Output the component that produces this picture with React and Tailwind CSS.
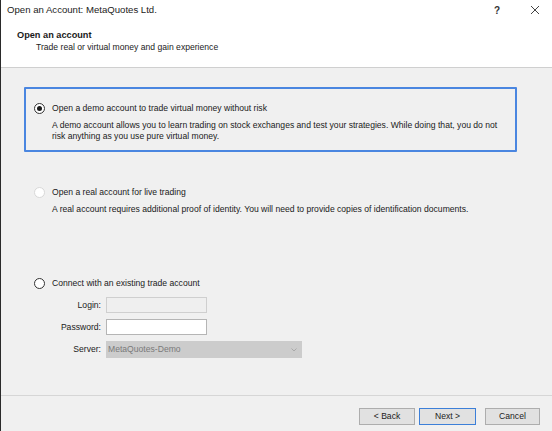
import React from "react";

function Radio({ checked }) {
  return (
    <span className="w-[11px] h-[11px] rounded-full border border-[#333] bg-white flex items-center justify-center shrink-0">
      {checked && <span className="w-[5px] h-[5px] rounded-full bg-[#1a1a1a]" />}
    </span>
  );
}

function RadioLight() {
  return <span className="w-[11px] h-[11px] rounded-full border border-[#d8d8d8] bg-white shrink-0" />;
}

export default function App() {
  return (
    <div
      className="w-[552px] h-[431px] bg-[#f0f0f0] border-l border-[#2a2a2a] flex flex-col text-[#1a1a1a] overflow-hidden"
      style={{ fontFamily: '"Liberation Sans", Arial, sans-serif' }}
    >
      {/* header */}
      <div className="bg-white h-[68px] border-b border-[#cfcfcf] shrink-0">
        <div className="flex items-center h-[20px] pl-[6px] pr-[11px]">
          <span className="text-[9.6px] text-[#222]">Open an Account: MetaQuotes Ltd.</span>
          <span className="ml-auto text-[10px] font-bold text-[#333] mr-[30px]">?</span>
          <svg width="10" height="10" viewBox="0 0 10 10" className="mr-[1px]">
            <path d="M1 1 L9 9 M9 1 L1 9" stroke="#444" strokeWidth="1" />
          </svg>
        </div>
        <div className="pl-[16px] pt-[9px] text-[9.2px] font-bold leading-[12px]">Open an account</div>
        <div className="pl-[35px] text-[8.6px] leading-[12px] text-[#222]">Trade real or virtual money and gain experience</div>
      </div>

      {/* body */}
      <div className="flex-1 flex flex-col">
        <div className="mt-[19px] ml-[23px] w-[493px] h-[65px] border-2 border-[#4a86e0] rounded-[1px] pl-[8px] pt-[13px]">
          <div className="flex items-center gap-[7px] h-[12px]">
            <Radio checked />
            <span className="text-[8.6px] whitespace-nowrap">Open a demo account to trade virtual money without risk</span>
          </div>
          <div className="ml-[18px] mt-[6px] text-[8.6px] leading-[11px] whitespace-nowrap">
            A demo account allows you to learn trading on stock exchanges and test your strategies. While doing that, you do not
            <br />
            risk anything as you use pure virtual money.
          </div>
        </div>

        <div className="mt-[34px] ml-[33px]">
          <div className="flex items-center gap-[7px] h-[12px]">
            <RadioLight />
            <span className="text-[8.6px]">Open a real account for live trading</span>
          </div>
          <div className="ml-[18px] mt-[6px] text-[8.6px] leading-[11px]">
            A real account requires additional proof of identity. You will need to provide copies of identification documents.
          </div>
        </div>

        <div className="mt-[62px] ml-[33px]">
          <div className="flex items-center gap-[7px] h-[12px]">
            <Radio />
            <span className="text-[8.6px]">Connect with an existing trade account</span>
          </div>
          <div className="mt-[8px] flex flex-col gap-[6px]">
            <div className="flex items-center">
              <span className="w-[72px] text-right text-[8.6px] pr-[5px]">Login:</span>
              <span className="w-[101px] h-[16px] border border-[#cfcfcf] bg-[#efefef]" />
            </div>
            <div className="flex items-center">
              <span className="w-[72px] text-right text-[8.6px] pr-[5px]">Password:</span>
              <span className="w-[101px] h-[16px] border border-[#b5b5b5] bg-white" />
            </div>
            <div className="flex items-center">
              <span className="w-[72px] text-right text-[8.6px] pr-[5px]">Server:</span>
              <span className="w-[196px] h-[17px] bg-[#cccccc] flex items-center pl-[2px] pr-[5px]">
                <span className="text-[8.6px] text-[#7a7a7a]">MetaQuotes-Demo</span>
                <svg width="6" height="4" viewBox="0 0 6 4" className="ml-auto">
                  <path d="M0.5 0.5 L3 3 L5.5 0.5" stroke="#a0a0a0" fill="none" strokeWidth="0.8" />
                </svg>
              </span>
            </div>
          </div>
        </div>

        <div className="mt-auto border-t border-[#d6d6d6] h-[36px] flex items-start pt-[12px] pr-[12px] justify-end">
          <button className="w-[56px] h-[17px] border border-[#adadad] bg-[#e1e1e1] text-[8.6px] text-[#222]">&lt; Back</button>
          <button className="ml-[4px] w-[57px] h-[17px] border border-[#3c7fd8] bg-[#e1e1e1] text-[8.6px] text-[#222]">Next &gt;</button>
          <button className="ml-[9px] w-[55px] h-[17px] border border-[#adadad] bg-[#e1e1e1] text-[8.6px] text-[#222]">Cancel</button>
        </div>
      </div>
    </div>
  );
}
